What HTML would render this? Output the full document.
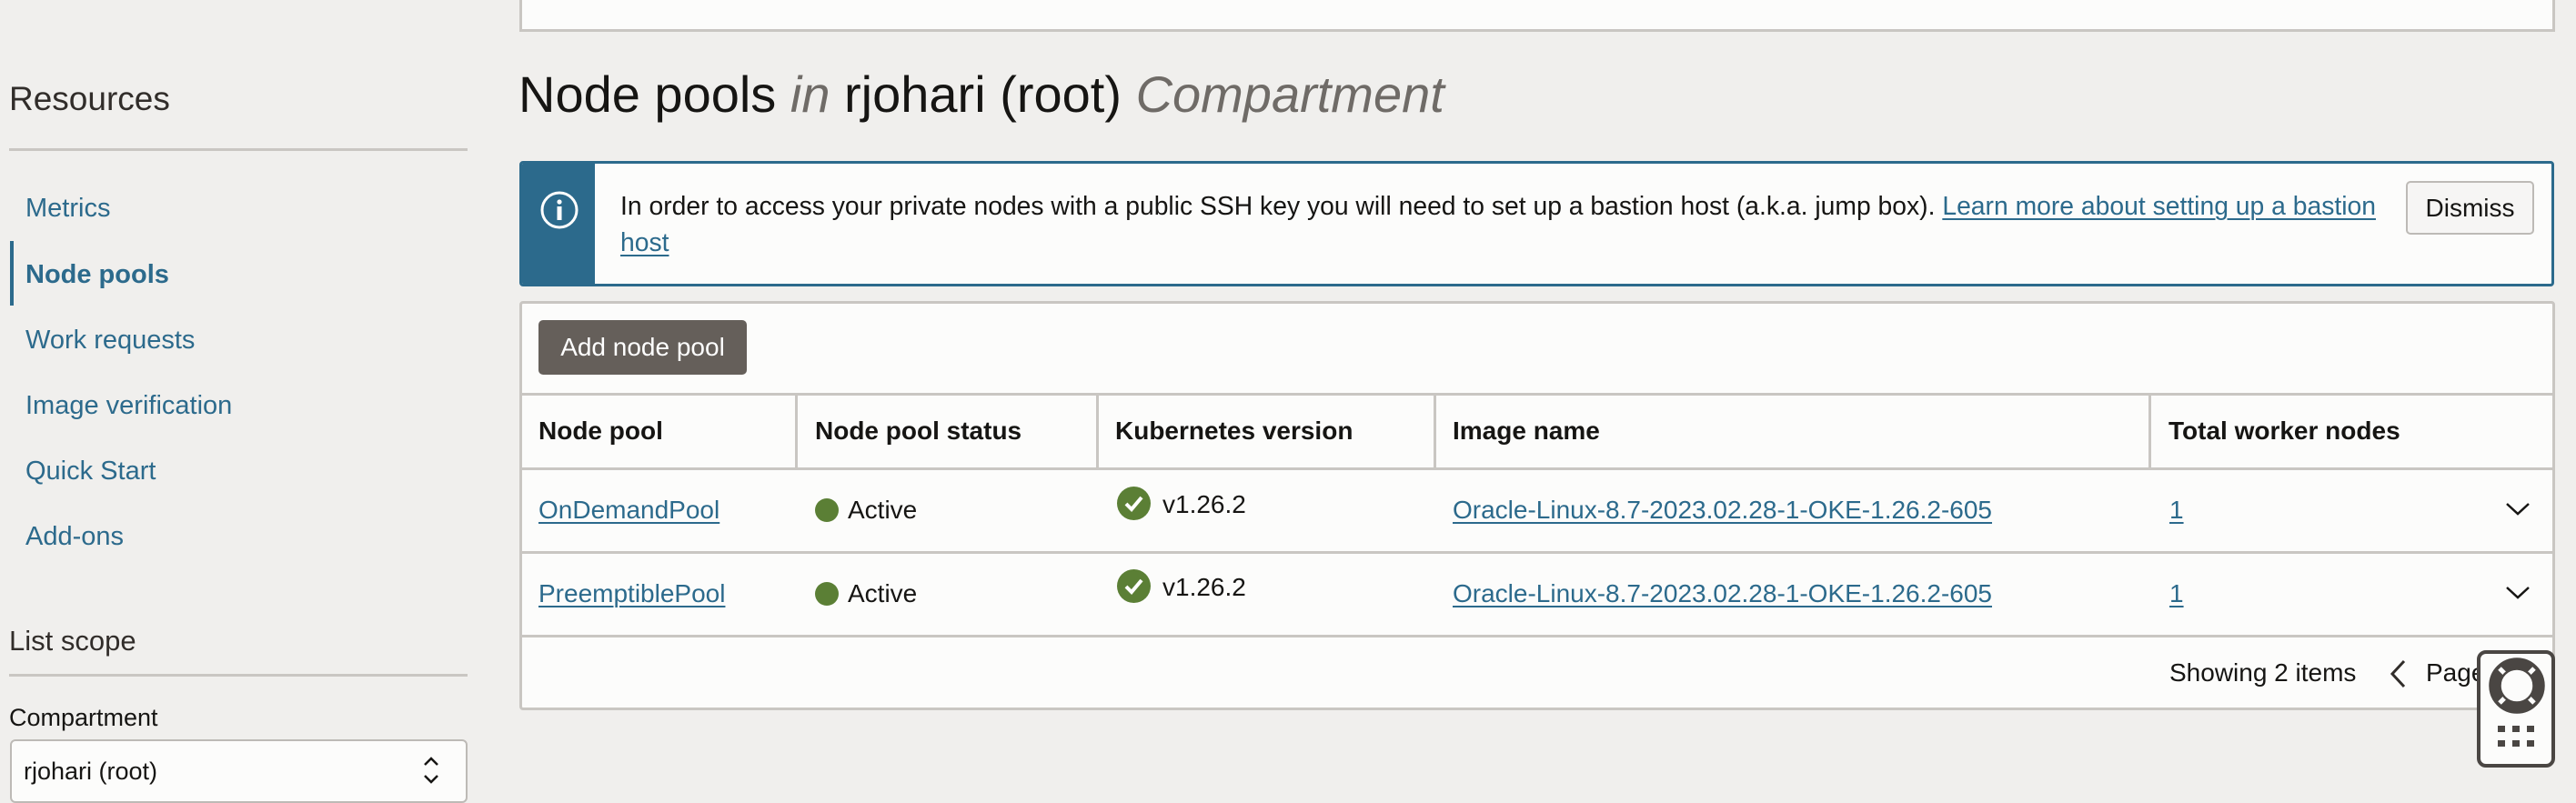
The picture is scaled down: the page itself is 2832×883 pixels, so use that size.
<!DOCTYPE html>
<html><head><meta charset="utf-8"><style>
*{margin:0;padding:0;box-sizing:border-box}
body{width:2832px;height:866px;overflow:hidden;background:#f0efed;font-family:"Liberation Sans",sans-serif;color:#161513;position:relative}
.a{position:absolute;white-space:nowrap}
.nav{position:absolute;left:28px;font-size:29px;color:#2c6a8c;line-height:36px}
.lk{color:#2c6a8c;text-decoration:underline;text-decoration-thickness:2px;text-underline-offset:4px}
.th{position:absolute;top:474px;transform:translateY(-50%);font-size:28px;font-weight:bold}
.td{position:absolute;transform:translateY(-50%);font-size:28px;white-space:nowrap}
.vl{position:absolute;top:433px;height:82px;width:3px;background:#c9c6c2}
.hl{position:absolute;left:571px;width:2238px;height:3px;background:#c9c6c2}
</style></head><body>
<div class="a" style="left:571px;top:-5px;width:2238px;height:40px;background:#fcfcfb;border:3px solid #c9c6c2;border-top:none"></div>

<div class="a" style="left:10px;top:86px;font-size:37px;line-height:46px;color:#312d2a">Resources</div>
<div class="a" style="left:10px;top:163px;width:504px;height:3px;background:#c9c6c2"></div>
<div class="nav" style="top:211px">Metrics</div>
<div class="a" style="left:11px;top:265px;width:4px;height:71px;background:#2c6a8c"></div>
<div class="nav" style="top:284px;font-weight:bold">Node pools</div>
<div class="nav" style="top:356px">Work requests</div>
<div class="nav" style="top:428px">Image verification</div>
<div class="nav" style="top:500px">Quick Start</div>
<div class="nav" style="top:572px">Add-ons</div>
<div class="a" style="left:10px;top:685px;font-size:31px;line-height:40px;color:#312d2a">List scope</div>
<div class="a" style="left:10px;top:741px;width:504px;height:3px;background:#c9c6c2"></div>
<div class="a" style="left:10px;top:772px;font-size:27px;line-height:34px;color:#161513">Compartment</div>
<div class="a" style="left:11px;top:813px;width:503px;height:70px;background:#fcfcfb;border:2px solid #bdbab6;border-radius:6px"></div>
<div class="a" style="left:26px;top:830px;font-size:27px;line-height:36px">rjohari (root)</div>
<svg class="a" style="left:462px;top:829px" width="24" height="36" viewBox="0 0 24 36"><path d="M5 12l7-7 7 7M5 24l7 7 7-7" fill="none" stroke="#161513" stroke-width="2.5"/></svg>

<div class="a" style="left:570px;top:72px;font-size:56px;line-height:64px;color:#161513">Node pools <i style="color:#6f6b67">in</i> rjohari (root) <i style="color:#6f6b67">Compartment</i></div>

<div class="a" style="left:571px;top:177px;width:2237px;height:138px;background:#fcfcfb;border:3px solid #2c6a8c;border-radius:4px;overflow:hidden">
 <div style="position:absolute;left:0;top:0;width:80px;height:100%;background:#2c6a8c"></div>
 <svg style="position:absolute;left:19px;top:29px" width="44" height="44" viewBox="0 0 44 44"><circle cx="22" cy="22" r="19" fill="none" stroke="#fff" stroke-width="3"/><circle cx="22" cy="13" r="2.6" fill="#fff"/><rect x="19.5" y="18" width="5" height="15" fill="#fff"/></svg>
 <div style="position:absolute;left:108px;top:26px;width:1950px;font-size:28.3px;line-height:40px;white-space:normal">In order to access your private nodes with a public SSH key you will need to set up a bastion host (a.k.a. jump box). <span class="lk">Learn more about setting up a bastion host</span></div>
 <div style="position:absolute;left:2071px;top:19px;width:141px;height:59px;border:2px solid #bdbab6;border-radius:5px;background:#f6f5f4;font-size:28px;line-height:55px;text-align:center">Dismiss</div>
</div>

<div class="a" style="left:571px;top:331px;width:2238px;height:450px;background:#fcfcfb;border:3px solid #c9c6c2;border-radius:4px"></div>
<div class="a" style="left:592px;top:352px;width:229px;height:60px;background:#655f5a;border-radius:5px;color:#fff;font-size:28px;line-height:60px;text-align:center">Add node pool</div>
<div class="hl" style="top:432px"></div>
<div class="hl" style="top:514px"></div>
<div class="hl" style="top:606px"></div>
<div class="hl" style="top:698px"></div>
<div class="vl" style="left:874px"></div>
<div class="vl" style="left:1205px"></div>
<div class="vl" style="left:1576px"></div>
<div class="vl" style="left:2362px"></div>
<div class="th" style="left:592px">Node pool</div>
<div class="th" style="left:896px">Node pool status</div>
<div class="th" style="left:1226px">Kubernetes version</div>
<div class="th" style="left:1597px">Image name</div>
<div class="th" style="left:2384px">Total worker nodes</div>

<div class="td lk" style="left:592px;top:561px">OnDemandPool</div>
<div class="a" style="left:896px;top:548px;width:26px;height:26px;border-radius:50%;background:#5b7f35"></div>
<div class="td" style="left:932px;top:561px">Active</div>
<svg class="a" style="left:1228px;top:535px" width="37" height="37" viewBox="0 0 37 37"><circle cx="18.5" cy="18.5" r="18.5" fill="#5b7f35"/><path d="M10 19l6 6 11-13" fill="none" stroke="#fff" stroke-width="4"/></svg>
<div class="td" style="left:1278px;top:555px">v1.26.2</div>
<div class="td lk" style="left:1597px;top:561px">Oracle-Linux-8.7-2023.02.28-1-OKE-1.26.2-605</div>
<div class="td lk" style="left:2385px;top:561px">1</div>
<svg class="a" style="left:2754px;top:552px" width="28" height="16" viewBox="0 0 28 16"><path d="M2 2l12 11 12-11" fill="none" stroke="#161513" stroke-width="2.5"/></svg>

<div class="td lk" style="left:592px;top:653px">PreemptiblePool</div>
<div class="a" style="left:896px;top:640px;width:26px;height:26px;border-radius:50%;background:#5b7f35"></div>
<div class="td" style="left:932px;top:653px">Active</div>
<svg class="a" style="left:1228px;top:626px" width="37" height="37" viewBox="0 0 37 37"><circle cx="18.5" cy="18.5" r="18.5" fill="#5b7f35"/><path d="M10 19l6 6 11-13" fill="none" stroke="#fff" stroke-width="4"/></svg>
<div class="td" style="left:1278px;top:646px">v1.26.2</div>
<div class="td lk" style="left:1597px;top:653px">Oracle-Linux-8.7-2023.02.28-1-OKE-1.26.2-605</div>
<div class="td lk" style="left:2385px;top:653px">1</div>
<svg class="a" style="left:2754px;top:644px" width="28" height="16" viewBox="0 0 28 16"><path d="M2 2l12 11 12-11" fill="none" stroke="#161513" stroke-width="2.5"/></svg>

<div class="td" style="left:2385px;top:740px">Showing 2 items</div>
<svg class="a" style="left:2626px;top:725px" width="20" height="32" viewBox="0 0 20 32"><path d="M17 2L4 16l13 14" fill="none" stroke="#312d2a" stroke-width="3"/></svg>
<div class="td" style="left:2667px;top:740px">Page</div>

<div class="a" style="left:2723px;top:715px;width:86px;height:129px;background:#fcfcfb;border:4px solid #4a4643;border-radius:10px">
 <svg style="position:absolute;left:8px;top:4px" width="64" height="62" viewBox="0 0 64 62"><circle cx="32" cy="31" r="24" fill="none" stroke="#4a4643" stroke-width="11"/><path d="M13 12l10 10M51 12l-10 10M13 50l10-10M51 50l-10-10" stroke="#fcfcfb" stroke-width="5"/><circle cx="32" cy="31" r="29.5" fill="none" stroke="#4a4643" stroke-width="2.5"/><circle cx="32" cy="31" r="18.5" fill="none" stroke="#4a4643" stroke-width="2.5"/></svg>
 <svg style="position:absolute;left:19px;top:79px" width="44" height="26" viewBox="0 0 44 26"><g fill="#4a4643"><rect x="0" y="0" width="8" height="7"/><rect x="16" y="0" width="8" height="7"/><rect x="32" y="0" width="8" height="7"/><rect x="0" y="16" width="8" height="7"/><rect x="16" y="16" width="8" height="7"/><rect x="32" y="16" width="8" height="7"/></g></svg>
</div>
</body></html>
